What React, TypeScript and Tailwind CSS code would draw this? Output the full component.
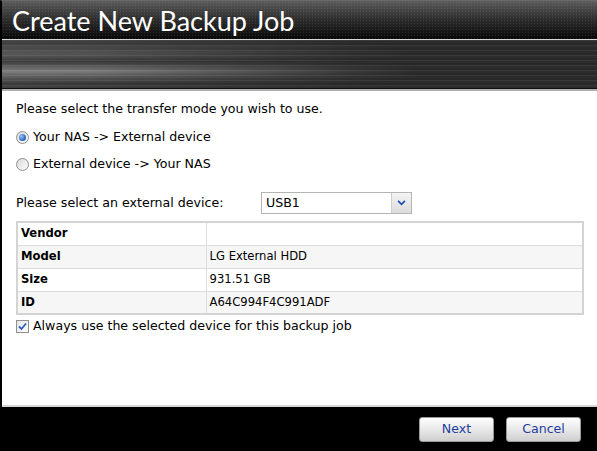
import React from "react";

const ROWS: { label: string; value: string }[] = [
  { label: "Vendor", value: "" },
  { label: "Model", value: "LG External HDD" },
  { label: "Size", value: "931.51 GB" },
  { label: "ID", value: "A64C994F4C991ADF" },
];

function Radio({ checked }: { checked?: boolean }) {
  return (
    <span className="flex h-[13px] w-[13px] shrink-0 items-center justify-center rounded-full border border-[#8f8f8f] bg-[linear-gradient(135deg,#d8d8d8,#ffffff)]">
      {checked && (
        <span className="h-[7px] w-[7px] rounded-full bg-[radial-gradient(circle_at_35%_35%,#9cc3f0,#1f5fc0_70%)]" />
      )}
    </span>
  );
}

function Checkbox() {
  return (
    <span className="flex h-[13px] w-[13px] shrink-0 items-center justify-center border border-[#8f8f8f] bg-[linear-gradient(135deg,#e4e4e4,#ffffff)]">
      <svg viewBox="0 0 11 11" className="h-[11px] w-[11px]">
        <path d="M2 5.5 L4.5 8 L9 2.5" fill="none" stroke="#2a5ec4" strokeWidth="1.8" />
      </svg>
    </span>
  );
}

function DialogButton({ children }: { children: React.ReactNode }) {
  return (
    <button className="h-[25px] w-[75px] rounded-[3px] border border-[#9a9a9a] bg-[linear-gradient(to_bottom,#ffffff,#e6e6e6_55%,#cfcfcf)] text-[12.6px] text-[#1f3f9e] [font-family:'DejaVu_Sans',sans-serif]">
      {children}
    </button>
  );
}

export default function App() {
  return (
    <div className="flex h-[451px] w-[597px] flex-col overflow-hidden border-l-2 border-t border-l-black border-t-[#6a6a6a] bg-white [font-family:'DejaVu_Sans',Verdana,sans-serif]">
      {/* title strip */}
      <div className="flex h-[38px] shrink-0 items-center bg-[radial-gradient(#ffffff18_1px,transparent_1px),linear-gradient(to_bottom,#5b5b5b,#303030_45%,#080808)] bg-[length:3px_3px,100%_100%] pl-[10px]">
        <h1 className="text-[27px] font-normal leading-none text-white [font-family:'URW_Gothic','Century_Gothic','Lato',sans-serif]">
          Create New Backup Job
        </h1>
      </div>
      <div className="h-px shrink-0 bg-[#d8d8d8]" />

      {/* brushed metal banner */}
      <div className="relative h-[48px] shrink-0 bg-[#2c2c2c]">
        <div className="absolute inset-0 bg-[repeating-linear-gradient(to_bottom,#ffffff10_0px,#ffffff10_1px,transparent_1px,transparent_3px,#00000018_3px,#00000018_5px)]" />
        <div className="absolute inset-0 bg-[linear-gradient(to_bottom,transparent_0%,#ffffff22_30%,transparent_45%,#ffffff55_65%,#ffffff30_75%,transparent_90%)] [mask-image:linear-gradient(to_right,black,black_15%,transparent_70%)]" />
        <div className="absolute inset-0 bg-[linear-gradient(to_right,#ffffff18,transparent_60%)]" />
      </div>
      <div className="h-px shrink-0 bg-[#111]" />
      <div className="h-[2px] shrink-0 bg-[#b0b0b0]" />

      {/* form body */}
      <div className="flex flex-1 flex-col px-[14px] pt-[10px] text-[12.6px] text-black">
        <p className="leading-[16px]">Please select the transfer mode you wish to use.</p>

        <label className="mt-[12px] flex items-center gap-[4px] leading-[16px]">
          <Radio checked />
          Your NAS -&gt; External device
        </label>
        <label className="mt-[11px] flex items-center gap-[4px] leading-[16px]">
          <Radio />
          External device -&gt; Your NAS
        </label>

        <div className="mt-[20px] flex items-center">
          <span className="w-[245px] leading-[16px]">Please select an external device:</span>
          <div className="flex h-[22px] w-[151px] items-center border border-[#b5b5b5] bg-white">
            <span className="flex-1 pl-[4px] leading-none">USB1</span>
            <span className="flex h-full w-[20px] items-center justify-center border-l border-[#cfcfcf] bg-[linear-gradient(to_bottom,#f4f4f4,#dcdcdc)]">
              <svg viewBox="0 0 10 7" className="h-[6px] w-[9px]">
                <path d="M1 1 L5 5 L9 1" fill="none" stroke="#1d4fb8" strokeWidth="2" />
              </svg>
            </span>
          </div>
        </div>

        <table className="mt-[7px] w-[568px] border-collapse border-2 border-[#d4d4d4] text-[11.6px]">
          <tbody>
            {ROWS.map((row, i) => (
              <tr key={row.label} className={i % 2 === 1 ? "bg-[#f6f6f6]" : "bg-white"}>
                <td className="h-[23px] w-[189px] border border-[#dcdcdc] pl-[3px] font-bold">{row.label}</td>
                <td className="h-[23px] border border-[#dcdcdc] pl-[3px]">{row.value}</td>
              </tr>
            ))}
          </tbody>
        </table>

        <label className="mt-[3px] flex items-center gap-[4px] leading-[16px]">
          <Checkbox />
          Always use the selected device for this backup job
        </label>
      </div>

      {/* footer */}
      <div className="h-[2px] shrink-0 bg-[#d6d6d6]" />
      <div className="flex h-[44px] shrink-0 items-start justify-end gap-[12px] bg-black pr-[16px] pt-[10px]">
        <DialogButton>Next</DialogButton>
        <DialogButton>Cancel</DialogButton>
      </div>
    </div>
  );
}
